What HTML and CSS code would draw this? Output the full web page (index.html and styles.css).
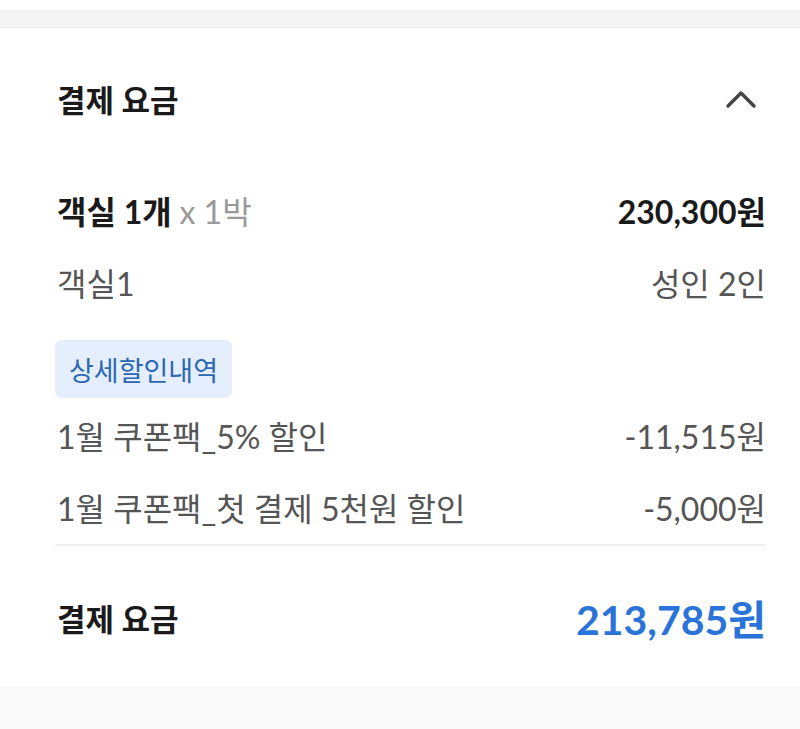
FILE: index.html
```html
<!DOCTYPE html>
<html lang="ko">
<head>
  <meta charset="UTF-8">
  <meta name="viewport" content="width=device-width, initial-scale=1.0">
  <title>결제 요금</title>
  <link rel="stylesheet" href="styles.css">
</head>
<body>
  <div class="top-gap"></div>
  <div class="divider-band"></div>
  <section class="card">
    <div class="card-head">
      <h2>결제 요금</h2>
      <svg class="chevron" width="32" height="20" viewBox="0 0 32 20">
        <path d="M3 17 L16 4 L29 17" fill="none" stroke="#444" stroke-width="3.4" stroke-linecap="round" stroke-linejoin="round"/>
      </svg>
    </div>

    <div class="row row-room">
      <span class="strong">객실 1개 <span class="muted">x 1박</span></span>
      <span class="strong">230,300원</span>
    </div>
    <div class="row row-sub">
      <span>객실1</span>
      <span>성인 2인</span>
    </div>

    <div class="badge">상세할인내역</div>

    <div class="row row-sale">
      <span>1월 쿠폰팩_5% 할인</span>
      <span>-11,515원</span>
    </div>
    <div class="row row-sale">
      <span>1월 쿠폰팩_첫 결제 5천원 할인</span>
      <span>-5,000원</span>
    </div>

    <div class="total">
      <span class="total-label">결제 요금</span>
      <span class="total-price">213,785원</span>
    </div>
  </section>
  <div class="bottom-gap"></div>
</body>
</html>
```

FILE: styles.css
```css
body {
  margin: 0;
  padding: 0;
  font-family: "Lato", "Noto Sans CJK KR", sans-serif;
  background-color: #f9f9f9;
  color: #1a1a1a;
}

.top-gap {
  height: 10px;
  background-color: #fff;
}

.divider-band {
  height: 16px;
  background-color: #f4f4f4;
  border-top: 1px solid #eee;
  border-bottom: 1px solid #eee;
}

.card {
  background-color: #fff;
  padding: 0 34px 0 55px;
}

.card-head {
  height: 146px;
  box-sizing: border-box;
  padding-bottom: 5px;
  display: flex;
  align-items: center;
  justify-content: space-between;
  padding-left: 2px;
}

.card-head h2 {
  margin: 0;
  font-size: 31px;
  font-weight: 700;
  color: #1a1a1a;
}

.chevron {
  margin-right: 9px;
}

.row {
  display: flex;
  align-items: center;
  justify-content: space-between;
  padding-left: 2px;
  font-size: 32px;
  color: #555;
}

.row-room {
  height: 72px;
  padding-bottom: 2px;
}

.row-sub {
  height: 68px;
  padding-bottom: 4px;
}

.strong {
  font-weight: 700;
  color: #1a1a1a;
  font-size: 32px;
}

.muted {
  font-weight: 400;
  color: #999;
}

.badge {
  display: inline-flex;
  align-items: center;
  height: 58px;
  margin-top: 20px;
  padding: 0 14px;
  border-radius: 7px;
  background-color: #e4eefc;
  color: #2b67b2;
  font-size: 27px;
}

.row-sale {
  height: 70px;
  padding-bottom: 2px;
  margin-top: 2px;
}

.row-sale + .row-sale {
  margin-top: 0;
  border-bottom: 2px solid #efefef;
}

.total {
  height: 140px;
  box-sizing: border-box;
  padding-top: 2px;
  display: flex;
  align-items: center;
  justify-content: space-between;
  padding-left: 2px;
}

.total-label {
  font-size: 31px;
  font-weight: 700;
}

.total-price {
  font-size: 41px;
  font-weight: 700;
  color: #2a74d9;
}

.bottom-gap {
  height: 42px;
}
```
